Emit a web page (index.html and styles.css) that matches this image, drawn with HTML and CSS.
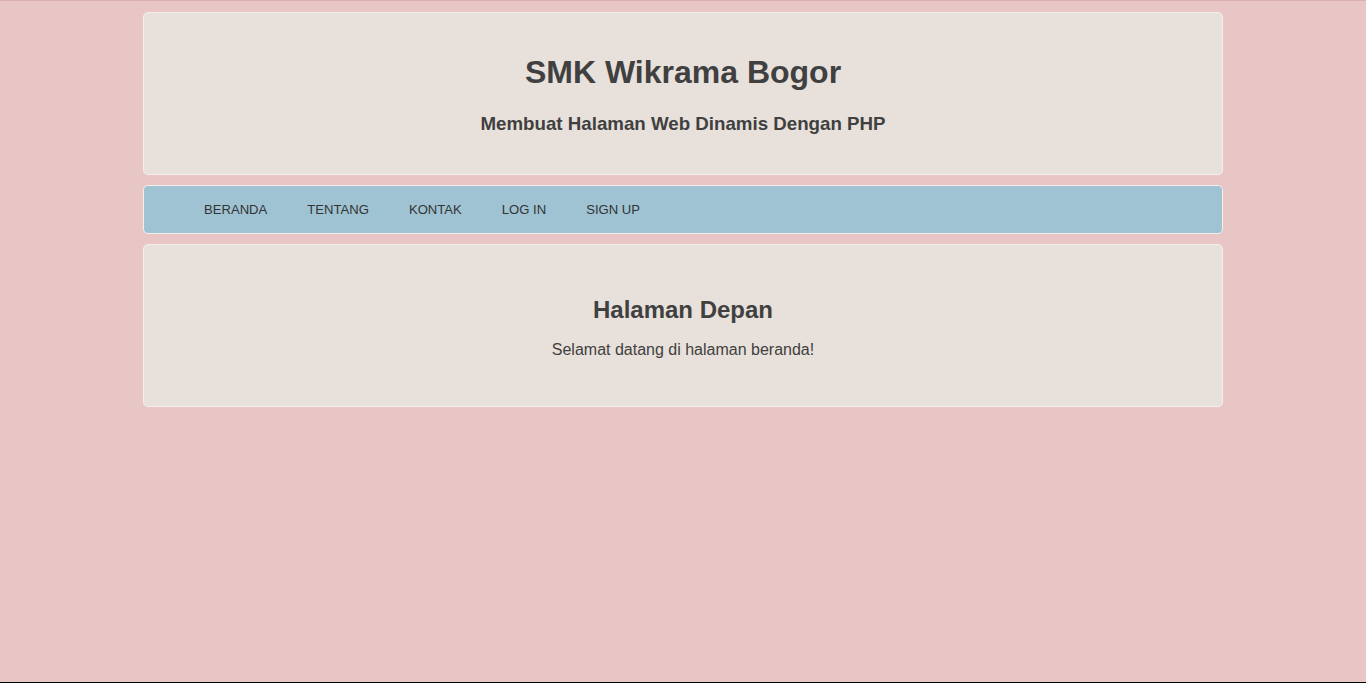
FILE: index.html
```html
<!DOCTYPE html>
<html lang="id">
<head>
<meta charset="utf-8">
<title>SMK Wikrama Bogor</title>
<link rel="stylesheet" href="styles.css">
</head>
<body>
<div class="container">
  <header class="header">
    <h1>SMK Wikrama Bogor</h1>
    <h3>Membuat Halaman Web Dinamis Dengan PHP</h3>
  </header>
  <nav class="nav">
    <ul>
      <li><a href="#">BERANDA</a></li>
      <li><a href="#">TENTANG</a></li>
      <li><a href="#">KONTAK</a></li>
      <li><a href="#">LOG IN</a></li>
      <li><a href="#">SIGN UP</a></li>
    </ul>
  </nav>
  <main class="content">
    <h2>Halaman Depan</h2>
    <p>Selamat datang di halaman beranda!</p>
  </main>
</div>
</body>
</html>
```
FILE: styles.css
```css
html, body {
  margin: 0;
  padding: 0;
}
body {
  background: #e8c6c6;
  font-family: "Liberation Sans", Arial, sans-serif;
  color: #404040;
  min-height: 100vh;
  box-sizing: border-box;
  border-top: 1px solid #d9afb3;
  border-bottom: 1px solid #000;
}
.container {
  width: 1080px;
  margin: 0 auto;
  padding-top: 11px;
  display: flex;
  flex-direction: column;
  gap: 10px;
}
.header, .nav, .content {
  border: 1px solid #f4efec;
  border-radius: 5px;
  text-align: center;
}
.header {
  background: #e8e0db;
  padding: 20px 20px 21px;
}
.header h1 {
  font-size: 32px;
  margin: 21.44px 0;
  line-height: 37px;
}
.header h3 {
  font-size: 18.72px;
  margin: 18.72px 0;
  line-height: 21.5px;
}
.nav {
  background: #9fc3d3;
  padding: 16px 40px;
  text-align: left;
}
.nav ul {
  list-style: none;
  margin: 0;
  padding: 0;
  display: flex;
}
.nav li a {
  display: block;
  padding: 0 20px;
  font-size: 13.1px;
  line-height: 15px;
  color: #333333;
  text-decoration: none;
}
.content {
  background: #e8e0db;
  padding: 31px 20px;
}
.content h2 {
  font-size: 24px;
  line-height: 27.6px;
  margin: 19.92px 0 17px;
}
.content p {
  font-size: 16px;
  line-height: 18.4px;
  margin: 16px 0;
}
```
